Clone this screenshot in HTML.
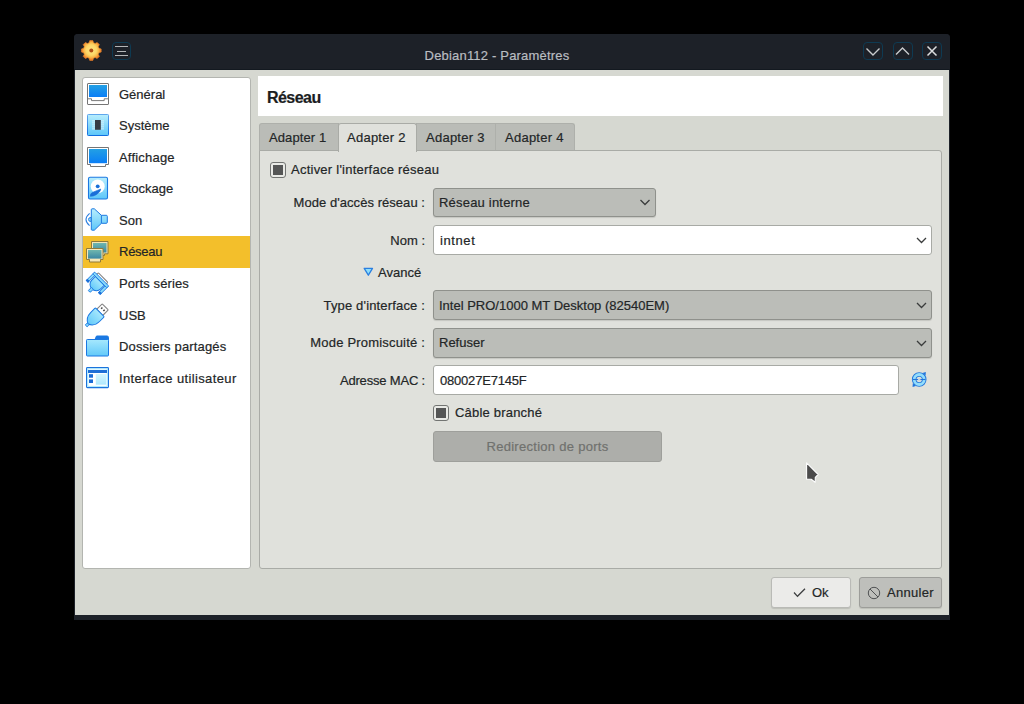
<!DOCTYPE html>
<html><head><meta charset="utf-8">
<style>
*{margin:0;padding:0;box-sizing:border-box}
html,body{width:1024px;height:704px;background:#000;overflow:hidden}
body{position:relative;font-family:"Liberation Sans",sans-serif;font-size:13px;color:#232627}
.a{position:absolute}
.t{position:absolute;line-height:15px;white-space:nowrap;-webkit-text-stroke:0.2px currentColor}
.r{text-align:right}
#win{left:74px;top:34px;width:876px;height:586px;background:#1d2128;border-radius:4px 4px 0 0}
#titlebar{left:74px;top:34px;width:876px;height:36px;border-bottom:1px solid #131920;background:#1d2128;border-radius:4px 4px 0 0}
#content{left:75px;top:70px;width:874px;height:545px;background:#d6d8d1}
#list{left:82px;top:77px;width:169px;height:492px;background:#fff;border:1px solid #b3b5b0;border-radius:3px}
#hdr{left:258px;top:76px;width:685px;height:40px;background:#fff}
.tab{position:absolute;top:123px;height:28px;background:#babcb7;border:1px solid #aeb0ab;border-bottom:none}
#panel{left:259px;top:150px;width:683px;height:419px;background:#e0e1dc;border:1px solid #a9aba6;border-radius:0 3px 3px 3px}
.combo{position:absolute;background:#bbbdb8;border:1px solid #8f918c;border-radius:3px;box-shadow:0 1px 1px rgba(0,0,0,0.12)}
.field{position:absolute;background:#fff;border:1px solid #a8aaa5;border-radius:3px}
.chk{position:absolute;width:16px;height:16px;border:1px solid #727472;border-radius:3px;background:#e9eae6}
.chk::after{content:"";position:absolute;left:2px;top:2px;width:10px;height:10px;background:#555656}
.btn{position:absolute;border-radius:3px}
</style></head><body>
<div class="a" id="win"></div>
<div class="a" id="titlebar"></div>
<div class="a" id="content"></div>

<!-- title bar -->
<svg class="a" style="left:0;top:0" width="120" height="70">
  <defs><radialGradient id="gg" cx="91.3" cy="50" r="10.5" gradientUnits="userSpaceOnUse"><stop offset="0" stop-color="#fde47e"/><stop offset="0.5" stop-color="#fdd768"/><stop offset="0.72" stop-color="#f9b545"/><stop offset="1" stop-color="#e5621c"/></radialGradient>
  <filter id="bl" x="-30%" y="-30%" width="160%" height="160%"><feGaussianBlur stdDeviation="0.55"/></filter></defs>
  <g filter="url(#bl)"><path d="M89.07,42.82 L89.74,40.62 L92.86,40.62 L93.53,42.82 L95.15,43.49 L97.18,42.41 L99.39,44.62 L98.31,46.65 L98.98,48.27 L101.18,48.94 L101.18,52.06 L98.98,52.73 L98.31,54.35 L99.39,56.38 L97.18,58.59 L95.15,57.51 L93.53,58.18 L92.86,60.38 L89.74,60.38 L89.07,58.18 L87.45,57.51 L85.42,58.59 L83.21,56.38 L84.29,54.35 L83.62,52.73 L81.42,52.06 L81.42,48.94 L83.62,48.27 L84.29,46.65 L83.21,44.62 L85.42,42.41 L87.45,43.49 Z" fill="url(#gg)" stroke="#ec8a2c" stroke-width="0.6" stroke-linejoin="round"/>
  <circle cx="91.3" cy="50.5" r="2" fill="#b04c14"/></g>
</svg>
<div class="a" style="left:112px;top:42px;width:19px;height:18px;border:1px solid #0e3a52;border-radius:4px"></div>
<div class="a" style="left:115px;top:46px;width:13px;height:1px;background:#b3b6b8"></div>
<div class="a" style="left:117px;top:51px;width:9px;height:1px;background:#b3b6b8"></div>
<div class="a" style="left:115px;top:55px;width:13px;height:1px;background:#b3b6b8"></div>
<div class="t" style="letter-spacing:0.19px;left:397px;top:48px;width:200px;text-align:center;color:#b9bdc1">Debian112 - Paramètres</div>

<div class="a" style="left:863px;top:42px;width:20px;height:18px;border:1px solid #0e3a52;border-radius:4px"></div>
<div class="a" style="left:893px;top:42px;width:20px;height:18px;border:1px solid #0e3a52;border-radius:4px"></div>
<div class="a" style="left:922px;top:42px;width:20px;height:18px;border:1px solid #0e3a52;border-radius:4px"></div>
<svg class="a" style="left:855px;top:34px" width="100" height="35">
  <polyline points="11.5,14.5 18,21 24.5,14.5" fill="none" stroke="#c9cbcd" stroke-width="1.4"/>
  <polyline points="41,20.5 47.5,14 54,20.5" fill="none" stroke="#c9cbcd" stroke-width="1.4"/>
  <path d="M72.5,12.5 L81.5,21.5 M81.5,12.5 L72.5,21.5" fill="none" stroke="#dcdedf" stroke-width="1.5"/>
</svg>

<!-- left list -->
<div class="a" id="list"></div>
<div class="a" style="left:83px;top:236px;width:167px;height:32px;background:#f3bf2b"></div>
<svg class="a" style="left:0;top:0" width="260" height="704">
 <defs>
  <linearGradient id="scr" x1="0" y1="0" x2="0" y2="1"><stop offset="0" stop-color="#23a0e4"/><stop offset="1" stop-color="#0a7ef6"/></linearGradient>
  <linearGradient id="lb" x1="0" y1="0" x2="0" y2="1"><stop offset="0" stop-color="#b8eefd"/><stop offset="1" stop-color="#5cc6f9"/></linearGradient>
  <linearGradient id="lb2" x1="0" y1="0" x2="0" y2="1"><stop offset="0" stop-color="#a6e8fd"/><stop offset="1" stop-color="#62c9f9"/></linearGradient>
  <linearGradient id="lb3" x1="0" y1="0" x2="0" y2="1"><stop offset="0" stop-color="#d6f6fe"/><stop offset="1" stop-color="#aee8fd"/></linearGradient>
  <linearGradient id="bd" x1="0" y1="0" x2="0" y2="1"><stop offset="0" stop-color="#5fa6ec"/><stop offset="1" stop-color="#106ee0"/></linearGradient>
  <linearGradient id="teal" x1="0" y1="0" x2="0" y2="1"><stop offset="0" stop-color="#6fb6ae"/><stop offset="1" stop-color="#3b87a3"/></linearGradient>
 </defs>
 <!-- General -->
 <rect x="87.5" y="83.5" width="21" height="21" rx="0.5" fill="#fff" stroke="#757575"/>
 <rect x="89" y="85" width="18" height="12" fill="url(#scr)"/>
 <path d="M88,98.8 H91.5 V100.6 H104.2 V98.8 H108" fill="none" stroke="#7a7a7a" stroke-width="1"/>
 <!-- Systeme -->
 <rect x="87.5" y="114.5" width="21" height="21" rx="0.8" fill="url(#lb)" stroke="url(#bd)"/>
 <path d="M92,120.9 H104 M92,122.9 H104 M92,124.9 H104 M92,126.9 H104 M92,128.9 H104" stroke="#dff4fc" stroke-width="0.9"/>
 <rect x="95" y="120" width="5.8" height="9.8" fill="#363a45"/>
 <!-- Affichage -->
 <path d="M87.5,147.5 H108.5 V164.5 H105.5 V166.5 H90.5 V164.5 H87.5 Z" fill="#fff" stroke="#757575"/>
 <rect x="89" y="149" width="18" height="14.2" fill="url(#scr)"/>
 <!-- Stockage -->
 <rect x="88.5" y="177.3" width="19" height="21.7" rx="1.5" fill="url(#lb)" stroke="#1b78e2" stroke-width="1.1"/>
 <circle cx="97.7" cy="186.4" r="7" fill="#fff"/>
 <circle cx="97.7" cy="186.3" r="1.9" fill="#1a6fd8"/>
 <path d="M90.3,196.3 Q89.8,193.4 93.5,191.9 L100.8,189 Q100.3,192.4 96.2,194.7 Q93.2,196.4 90.3,196.3 Z" fill="#1a6fd8" stroke="#1a6fd8" stroke-width="0.6" stroke-linejoin="round"/>
 <!-- Son -->
 <path d="M92.1,208.8 H94.3 L101.4,215.3 H106.3 Q107.3,215.3 107.3,216.3 V222.3 Q107.3,223.3 106.3,223.3 H101.4 L94.3,230.2 H92.1 Q91.3,230.2 91.3,229.4 V209.6 Q91.3,208.8 92.1,208.8 Z" fill="url(#lb)" stroke="#1b78e2" stroke-linejoin="round"/>
 <path d="M101.4,215.3 V223.3" stroke="#1b78e2"/>
 <path d="M89.6,213.3 Q82.4,219.5 89.6,225.6" fill="none" stroke="#2a7fe0" stroke-width="1.1"/>
 <path d="M91,217.4 Q88.2,217.6 88.6,219.4 Q88.2,221.4 91,221.5 Z" fill="#9fe3fc" stroke="#1b78e2" stroke-width="0.9"/>
 <!-- Reseau -->
 <path d="M91.5,241.5 H108 V253.8 H104.5 V255.5 H91.5 Z" fill="#f3e5b5" stroke="#8e7a3c"/>
 <rect x="93" y="243" width="13.5" height="9.5" fill="url(#teal)"/>
 <path d="M86.5,248.5 H103 V259.5 H100.5 V262 H89.5 V259.5 H86.5 Z" fill="#f6e8b8" stroke="#8e7a3c"/>
 <rect x="88" y="250" width="13.5" height="8.6" fill="url(#teal)"/>
 <!-- Ports series -->
 <g transform="translate(100.8,279.9) rotate(45) scale(0.9)">
  <rect x="-7.5" y="-3.6" width="15" height="3.8" rx="1" fill="#fff" stroke="#8a8a8a" stroke-width="1.2"/>
  <path d="M-7,1.6 H7 V7.2 A7,6.8 0 0 1 -7,7.2 Z" fill="url(#lb2)" stroke="#1b78e2" stroke-width="1.1"/>
  <rect x="-1.5" y="13.2" width="3" height="5" rx="0.6" fill="#7fd3fa" stroke="#1b78e2" stroke-width="1"/>
  <rect x="-11" y="-0.3" width="2.8" height="12" fill="#8adcfb" stroke="#1b78e2" stroke-width="1"/>
  <rect x="8.2" y="-0.3" width="2.8" height="12" fill="#8adcfb" stroke="#1b78e2" stroke-width="1"/>
  <rect x="-11.5" y="9.6" width="3.8" height="2.8" rx="0.8" fill="#1a6fd8"/>
  <rect x="7.7" y="9.6" width="3.8" height="2.8" rx="0.8" fill="#1a6fd8"/>
  <rect x="-11" y="-1.4" width="22" height="2.8" rx="0.8" fill="#8adcfb" stroke="#1b78e2" stroke-width="1"/>
 </g>
 <!-- USB -->
 <g transform="translate(95.7,316.4) rotate(45) scale(0.9)">
  <rect x="-4.8" y="-15" width="9.6" height="8.8" rx="0.8" fill="#fff" stroke="#858585" stroke-width="1.2"/>
  <rect x="-2.6" y="-12.3" width="1.7" height="2" fill="#444"/>
  <rect x="0.9" y="-12.3" width="1.7" height="2" fill="#444"/>
  <path d="M-6,-6.5 H6 Q7,-6.5 7,-5.5 V1 Q7,9 0,12 Q-7,9 -7,1 V-5.5 Q-7,-6.5 -6,-6.5 Z" fill="url(#lb2)" stroke="#1b78e2" stroke-width="1.1"/>
  <rect x="-1.6" y="11.6" width="3.2" height="3.4" rx="1" fill="#7fd3fa" stroke="#1b78e2" stroke-width="1"/>
 </g>
 <!-- Dossiers -->
 <path d="M95,339.5 L96.5,336 H107 Q108.5,336 108.5,337.5 V340 Z" fill="#1b78e2" stroke="#1b78e2"/>
 <rect x="86.5" y="339.5" width="22" height="16.5" rx="0.8" fill="url(#lb2)" stroke="#1b78e2"/>
 <!-- Interface -->
 <rect x="86.6" y="367.6" width="21.8" height="20" rx="0.8" fill="#fff" stroke="#1b72dc" stroke-width="1.2"/>
 <rect x="87.8" y="368.8" width="19.4" height="17.6" fill="none" stroke="#a6e8fd" stroke-width="1"/>
 <rect x="88" y="370" width="19" height="3" fill="#1f6fd6"/>
 <rect x="89" y="374.2" width="4" height="3.5" fill="#1a6bd6"/>
 <rect x="89" y="379.4" width="4" height="3.6" fill="#1a6bd6"/>
 <rect x="95.8" y="374" width="10.4" height="10.7" fill="url(#lb3)"/>
</svg>
<div class="t" style="left:119px;top:87px">Général</div>
<div class="t" style="left:119px;top:118px">Système</div>
<div class="t" style="letter-spacing:0.2px;left:119px;top:150px">Affichage</div>
<div class="t" style="left:119px;top:181px">Stockage</div>
<div class="t" style="left:119px;top:213px">Son</div>
<div class="t" style="left:119px;top:244px;letter-spacing:-0.25px">Réseau</div>
<div class="t" style="letter-spacing:0.1px;left:119px;top:276px">Ports séries</div>
<div class="t" style="left:119px;top:308px">USB</div>
<div class="t" style="letter-spacing:0.15px;left:119px;top:339px">Dossiers partagés</div>
<div class="t" style="letter-spacing:0.37px;left:119px;top:371px">Interface utilisateur</div>

<!-- header -->
<div class="a" id="hdr"></div>
<div class="t" style="left:267px;top:88px;font-size:16px;line-height:20px;font-weight:bold;color:#1b1d1e;letter-spacing:-0.55px">Réseau</div>

<!-- tabs -->
<div class="tab" style="left:259px;width:80px;border-radius:3px 0 0 0"></div>
<div class="tab" style="left:416px;width:80px"></div>
<div class="tab" style="left:495px;width:80px;border-radius:0 3px 0 0"></div>
<div class="a" id="panel"></div>
<div class="tab" style="left:338px;width:79px;background:#e0e1dc;border-color:#a9aba6;border-radius:3px 3px 0 0;height:29px"></div>
<div class="t" style="left:269px;top:130px;letter-spacing:0.1px">Adapter 1</div>
<div class="t" style="left:347px;top:130px;letter-spacing:0.25px">Adapter 2</div>
<div class="t" style="left:426px;top:130px;letter-spacing:0.25px">Adapter 3</div>
<div class="t" style="left:505px;top:130px;letter-spacing:0.25px">Adapter 4</div>

<!-- form -->
<div class="chk" style="left:270px;top:162px"></div>
<div class="t" style="letter-spacing:0.24px;left:291px;top:162px">Activer l'interface réseau</div>

<div class="t r" style="letter-spacing:0.05px;left:225px;width:200px;top:195px">Mode d'accès réseau :</div>
<div class="combo" style="left:433px;top:188px;width:223px;height:29px"></div>
<div class="t" style="letter-spacing:0.2px;left:439px;top:195px">Réseau interne</div>

<div class="t r" style="left:225px;width:200px;top:233px">Nom :</div>
<div class="field" style="left:433px;top:225px;width:499px;height:30px"></div>
<div class="t" style="letter-spacing:0.6px;left:440px;top:233px">intnet</div>

<svg class="a" style="left:358px;top:262px" width="22" height="20" viewBox="358 262 22 20"><path d="M364.2,268.4 L372.5,268.4 L368.35,275.2 Z" fill="#8fdefb" stroke="#2a7fe0" stroke-width="1.3" stroke-linejoin="round"/></svg>
<div class="t" style="left:378px;top:265px">Avancé</div>

<div class="t r" style="letter-spacing:0.16px;left:225px;width:200px;top:298px">Type d'interface :</div>
<div class="combo" style="left:433px;top:290px;width:499px;height:30px"></div>
<div class="t" style="left:439px;top:298px">Intel PRO/1000 MT Desktop (82540EM)</div>

<div class="t r" style="letter-spacing:0.19px;left:225px;width:200px;top:335px">Mode Promiscuité :</div>
<div class="combo" style="left:433px;top:328px;width:499px;height:30px"></div>
<div class="t" style="left:439px;top:335px">Refuser</div>

<div class="t r" style="letter-spacing:-0.18px;left:225px;width:200px;top:373px">Adresse MAC :</div>
<div class="field" style="left:433px;top:365px;width:466px;height:30px"></div>
<div class="t" style="letter-spacing:-0.2px;left:440px;top:373px">080027E7145F</div>

<svg class="a" style="left:906px;top:366px" width="28" height="28" viewBox="906 366 28 28">
  <circle cx="919.2" cy="379.5" r="5" fill="none" stroke="#1f74dc" stroke-width="4.6"/>
  <circle cx="919.2" cy="379.5" r="5" fill="none" stroke="#93ddfb" stroke-width="2.8"/>
  <path d="M913,379.5 H925.5" stroke="#1f74dc" stroke-width="1.1"/>
  <path d="M922.5,373 L925.8,372 L925.6,375.8 Z" fill="#1f74dc"/>
  <path d="M915.9,386 L912.6,387 L912.8,383.2 Z" fill="#1f74dc"/>
  <circle cx="919.2" cy="379.5" r="1.2" fill="#c9d4da"/>
</svg>

<svg class="a" style="left:0;top:0" width="1024" height="704" pointer-events="none">
  <polyline points="640.5,200 645,204.5 649.5,200" fill="none" stroke="#3a3c3c" stroke-width="1.3"/>
  <polyline points="917,238 921.5,242.5 926,238" fill="none" stroke="#3a3c3c" stroke-width="1.3"/>
  <polyline points="917,303 921.5,307.5 926,303" fill="none" stroke="#3a3c3c" stroke-width="1.3"/>
  <polyline points="917,341 921.5,345.5 926,341" fill="none" stroke="#3a3c3c" stroke-width="1.3"/>
</svg>

<div class="chk" style="left:433px;top:405px"></div>
<div class="t" style="left:455px;top:405px;letter-spacing:0.2px">Câble branché</div>

<div class="btn" style="left:433px;top:431px;width:229px;height:31px;background:#adaeaa;border:1px solid #9e9f9b"></div>
<div class="t" style="letter-spacing:0.28px;left:433px;width:229px;text-align:center;top:439px;color:#70716e">Redirection de ports</div>

<svg class="a" style="left:796px;top:452px" width="32" height="40" viewBox="796 452 32 40">
  <path d="M806.6,462.8 L818.2,474.5 L815.3,477.3 L815.2,482.3 L811.2,479.2 L806.6,479.2 Z" fill="#4b4b4b" stroke="#fff" stroke-width="1.1" stroke-linejoin="round"/>
</svg>
<!-- buttons -->
<div class="btn" style="left:771px;top:577px;width:80px;height:31px;background:#ebebe9;border:1px solid #b9bab6;box-shadow:0 1px 1px rgba(0,0,0,0.12)"></div>
<svg class="a" style="left:793px;top:587px" width="13" height="11"><polyline points="1,5.5 4.5,9.3 12,1.8" fill="none" stroke="#3c3e3f" stroke-width="1.25"/></svg>
<div class="t" style="left:812px;top:585px">Ok</div>
<div class="btn" style="left:859px;top:577px;width:83px;height:31px;background:#bebfbb;border:1px solid #9c9d99;box-shadow:0 1px 1px rgba(0,0,0,0.12)"></div>
<svg class="a" style="left:867px;top:586px" width="14" height="14"><circle cx="7" cy="7" r="5.7" fill="none" stroke="#505253" stroke-width="1"/><path d="M3,3 L11,11" stroke="#505253" stroke-width="1"/></svg>
<div class="t" style="letter-spacing:0.3px;left:887px;top:585px">Annuler</div>

<!-- bottom border -->
<div class="a" style="left:74px;top:615px;width:876px;height:5px;background:#1d2128"></div>
</body></html>
